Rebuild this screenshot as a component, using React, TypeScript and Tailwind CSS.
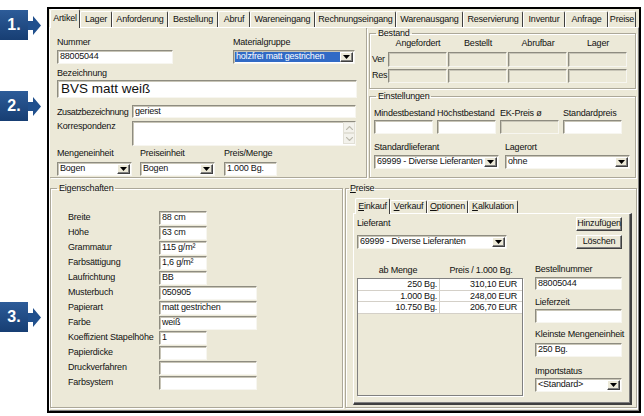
import React from 'react';

const sunken =
  'border border-t-[#8e8c80] border-l-[#8e8c80] border-r-[#f7f6f0] border-b-[#f7f6f0] shadow-[inset_1px_1px_0_#c8c5b7]';
const raised =
  'border border-t-white border-l-white border-r-[#404040] border-b-[#404040] shadow-[inset_-1px_-1px_0_#808080]';
const etched = 'border border-[#aca899] shadow-[inset_1px_1px_0_#fff,1px_1px_0_#fff]';

function Badge({ label }: { label: string }) {
  return (
    <div className="flex items-center h-[30px]">
      <div className="w-[28px] h-[30px] bg-gradient-to-b from-[#2d5c99] to-[#173e73] text-white font-bold text-[16px] tracking-normal flex items-center justify-center">
        {label}
      </div>
      <svg width="14" height="30" viewBox="0 0 14 30">
        <path d="M0 11H5V6L13 15.5L5 25V20H0Z" fill="#21508d" />
      </svg>
    </div>
  );
}

function Label({ children, className = '' }: { children?: React.ReactNode; className?: string }) {
  return <div className={`h-[12px] leading-[12px] whitespace-nowrap ${className}`}>{children}</div>;
}

function Input({ value = '', className = '' }: { value?: string; className?: string }) {
  return (
    <div className={`bg-white ${sunken} pl-[2px] flex items-center whitespace-nowrap overflow-hidden ${className}`}>
      {value}
    </div>
  );
}

function DropArrow() {
  return (
    <div className={`w-[13px] h-full bg-[#ece9d8] ${raised} flex items-center justify-center shrink-0`}>
      <svg width="7" height="4" viewBox="0 0 7 4">
        <path d="M0 0H7L3.5 4Z" fill="#000" />
      </svg>
    </div>
  );
}

function Select({ value, className = '', highlight = false }: { value: string; className?: string; highlight?: boolean }) {
  return (
    <div className={`bg-white ${sunken} flex p-[1px] ${className}`}>
      <div
        className={`flex-1 flex items-center pl-[1px] whitespace-nowrap overflow-hidden ${
          highlight ? 'bg-[#316ac5] text-white' : ''
        }`}
      >
        {value}
      </div>
      <DropArrow />
    </div>
  );
}

function Button({ children }: { children: React.ReactNode }) {
  return (
    <div className={`w-[46px] h-[14px] ${raised} bg-[#ece9d8] flex items-center justify-center whitespace-nowrap ml-auto`}>
      {children}
    </div>
  );
}

const mainTabs: [string, string][] = [
  ['Artikel', 'w-[30px]'],
  ['Lager', 'w-[32px]'],
  ['Anforderung', 'w-[56px]'],
  ['Bestellung', 'w-[50px]'],
  ['Abruf', 'w-[32px]'],
  ['Wareneingang', 'w-[65px]'],
  ['Rechnungseingang', 'w-[81px]'],
  ['Warenausgang', 'w-[67px]'],
  ['Reservierung', 'w-[60px]'],
  ['Inventur', 'w-[42px]'],
  ['Anfrage', 'w-[43px]'],
  ['Preise', 'w-[28px]'],
];

const priceTabs: [string, string, string][] = [
  ['E', 'inkauf', 'w-[35px]'],
  ['V', 'erkauf', 'w-[37px]'],
  ['O', 'ptionen', 'w-[41px]'],
  ['K', 'alkulation', 'w-[50px]'],
];

const properties: [string, string, boolean][] = [
  ['Breite', '88 cm', false],
  ['Höhe', '63 cm', false],
  ['Grammatur', '115 g/m²', false],
  ['Farbsättigung', '1,6 g/m²', false],
  ['Laufrichtung', 'BB', false],
  ['Musterbuch', '050905', true],
  ['Papierart', 'matt gestrichen', true],
  ['Farbe', 'weiß', true],
  ['Koeffizient Stapelhöhe', '1', false],
  ['Papierdicke', '', false],
  ['Druckverfahren', '', true],
  ['Farbsystem', '', true],
];

const prices = [
  ['250 Bg.', '310,10 EUR'],
  ['1.000 Bg.', '248,00 EUR'],
  ['10.750 Bg.', '206,70 EUR'],
];

function ScrollBtn({ up }: { up?: boolean }) {
  return (
    <div className="w-[12px] h-[11px] bg-[#f3f2ec] border border-[#e2e0d6] flex items-center justify-center">
      <svg width="7" height="4" viewBox="0 0 7 4">
        <path d={up ? 'M0 4L3.5 0.5L7 4' : 'M0 0L3.5 3.5L7 0'} stroke="#bcbaae" strokeWidth="1.2" fill="none" />
      </svg>
    </div>
  );
}

export default function App() {
  return (
    <div className="w-[644px] h-[416px] bg-white flex overflow-hidden font-['Liberation_Sans',Arial,sans-serif] text-[9px] tracking-[-0.2px] text-[#111]">
      {/* callout badges */}
      <div className="w-[47px] shrink-0 flex flex-col pt-[10px]">
        <Badge label="1." />
        <div className="mt-[51px]">
          <Badge label="2." />
        </div>
        <div className="mt-[181px]">
          <Badge label="3." />
        </div>
      </div>

      {/* window */}
      <div className="mt-[7px] w-[594px] h-[406px] border-2 border-black bg-[#ece9d8] flex flex-col">
        <div className="h-[18px] flex items-end pl-[1px] shrink-0">
          {mainTabs.map(([name, w], i) => (
            <div
              key={name}
              className={`${w} shrink-0 border-t border-l border-white border-r border-r-[#404040] rounded-t-[2px] flex items-center justify-center whitespace-nowrap ${
                i === 0 ? 'h-[19px] -mb-px relative z-10 bg-[#ece9d8]' : 'h-[16px]'
              }`}
            >
              {name}
            </div>
          ))}
        </div>

        <div className="flex-1 border-t border-l border-white border-r border-b border-r-[#808080] border-b-[#808080] flex flex-col">
          {/* top section */}
          <div className="h-[154px] flex items-start shrink-0">
            <div className="w-[317px] h-[150px] border-r border-b border-[#aca899] shadow-[1px_1px_0_#fff] pl-[7px] pt-[8px] flex flex-col">
              <div className="flex">
                <Label className="w-[176px]">Nummer</Label>
                <Label>Materialgruppe</Label>
              </div>
              <div className="flex mt-[2px]">
                <Input value="88005044" className="w-[116px] h-[14px]" />
                <Select value="holzfrei matt gestrichen" highlight className="w-[122px] h-[14px] ml-[60px]" />
              </div>
              <Label className="mt-[3px]">Bezeichnung</Label>
              <Input value="BVS matt weiß" className="mt-[1px] w-[300px] h-[18px] text-[13.5px] tracking-normal pl-[3px]" />
              <div className="flex mt-[7px] h-[13px] items-center">
                <Label className="w-[75px] tracking-[-0.4px]">Zusatzbezeichnung</Label>
                <Input value="geriest" className="w-[224px] h-[13px]" />
              </div>
              <div className="flex mt-[3px] h-[25px]">
                <Label className="w-[75px] -mt-[1px]">Korrespondenz</Label>
                <div className={`w-[224px] h-[25px] bg-white ${sunken} flex justify-end`}>
                  <div className="flex flex-col">
                    <ScrollBtn up />
                    <ScrollBtn />
                  </div>
                </div>
              </div>
              <div className="flex mt-[1px]">
                <Label className="w-[83px]">Mengeneinheit</Label>
                <Label className="w-[84px]">Preiseinheit</Label>
                <Label>Preis/Menge</Label>
              </div>
              <div className="flex mt-[3px] h-[14px]">
                <Select value="Bogen" className="w-[75px] h-[14px]" />
                <Select value="Bogen" className="w-[75px] h-[14px] ml-[8px]" />
                <Input value="1.000 Bg." className="w-[53px] h-[14px] ml-[9px]" />
              </div>
            </div>

            <div className="ml-[2px] w-[267px] flex flex-col">
              <fieldset className={etched}>
                <legend className="ml-[6px] px-[2px] leading-[10px]">Bestand</legend>
                <div className="flex pl-[18px] h-[11px] leading-[11px]">
                  {['Angefordert', 'Bestellt', 'Abrufbar', 'Lager'].map((h) => (
                    <div key={h} className="w-[60px] text-center">
                      {h}
                    </div>
                  ))}
                </div>
                {['Ver', 'Res'].map((r, i) => (
                  <div key={r} className={`flex items-center ${i === 0 ? 'mt-[3px] h-[15px]' : 'mt-[2px] h-[14px]'}`}>
                    <div className="w-[18px] pl-[2px]">{r}</div>
                    {[0, 1, 2, 3].map((c) => (
                      <div key={c} className={`w-[59px] h-full mr-[1px] ${sunken} bg-[#ece9d8]`} />
                    ))}
                  </div>
                ))}
                <div className="h-[5px]" />
              </fieldset>

              <fieldset className={`${etched} mt-[2px] pl-[4px]`}>
                <legend className="ml-[2px] px-[2px] leading-[10px]">Einstellungen</legend>
                <div className="grid grid-cols-[59px_59px_59px_59px] gap-x-[4px] mt-[6px]">
                  <Label>Mindestbestand</Label>
                  <Label>Höchstbestand</Label>
                  <Label>EK-Preis ø</Label>
                  <Label>Standardpreis</Label>
                  <Input className="h-[14px] mt-[1px]" />
                  <Input className="h-[14px] mt-[1px]" />
                  <div className={`h-[14px] mt-[1px] ${sunken} bg-[#ece9d8]`} />
                  <Input className="h-[14px] mt-[1px]" />
                </div>
                <div className="flex mt-[7px]">
                  <Label className="w-[131px]">Standardlieferant</Label>
                  <Label>Lagerort</Label>
                </div>
                <div className="flex mt-[2px] mb-[8px]">
                  <Select value="69999 - Diverse Lieferanten" className="w-[125px] h-[14px]" />
                  <Select value="ohne" className="w-[125px] h-[14px] ml-[6px]" />
                </div>
              </fieldset>
            </div>
          </div>

          {/* bottom section */}
          <div className="flex">
            <fieldset className={`${etched} w-[293px] h-[226px] pl-[17px]`}>
              <legend className="ml-[-11px] px-[2px] leading-[12px]">Eigenschaften</legend>
              <div className="mt-[17px] flex flex-col gap-[1px]">
                {properties.map(([name, value, long]) => (
                  <div key={name} className="flex items-center h-[14px]">
                    <div className="w-[91px] whitespace-nowrap">{name}</div>
                    <Input value={value} className={`${long ? 'w-[98px]' : 'w-[48px]'} h-[14px]`} />
                  </div>
                ))}
              </div>
            </fieldset>

            <fieldset className={`${etched} ml-[2px] w-[292px] h-[226px]`}>
              <legend className="ml-[3px] px-[1px] leading-[12px]">
                <span className="underline">P</span>reise
              </legend>
              <div className="mt-[4px] h-[15px] pl-[9px] flex items-end">
                {priceTabs.map(([u, rest, w], i) => (
                  <div
                    key={u}
                    className={`${w} shrink-0 border-t border-l border-white border-r border-r-[#404040] rounded-t-[2px] flex items-center justify-center whitespace-nowrap ${
                      i === 0 ? 'h-[16px] -mb-px relative z-10 bg-[#ece9d8]' : 'h-[13px]'
                    }`}
                  >
                    <span className="underline">{u}</span>
                    {rest}
                  </div>
                ))}
              </div>
              <div className="ml-[7px] w-[279px] h-[192px] border-t border-l border-white border-r-2 border-b-2 border-r-[#404040] border-b-[#404040] shadow-[inset_-1px_-1px_0_#808080] flex">
                <div className="w-[169px] pl-[3px] pt-[3px] flex flex-col">
                  <Label>Lieferant</Label>
                  <Select value="69999 - Diverse Lieferanten" className="mt-[6px] w-[150px] h-[14px]" />
                  <div className="flex mt-[15px] h-[12px] leading-[12px]">
                    <div className="w-[82px] text-center">ab Menge</div>
                    <div className="w-[84px] text-center">Preis / 1.000 Bg.</div>
                  </div>
                  <div className="mt-[2px] w-[166px] h-[118px] border border-[#808080] shadow-[1px_1px_0_#fff]">
                    {prices.map(([q, p]) => (
                      <div key={q} className="flex h-[11.5px] leading-[11px] bg-white border-b border-[#d4d0c8]">
                        <div className="w-[82px] text-right pr-[2px] border-r border-[#d4d0c8]">{q}</div>
                        <div className="flex-1 text-right pr-[5px]">{p}</div>
                      </div>
                    ))}
                  </div>
                </div>
                <div className="ml-[12px] w-[87px] pt-[3px] flex flex-col">
                  <Button>Hinzufügen</Button>
                  <div className="mt-[4px]">
                    <Button>Löschen</Button>
                  </div>
                  <Label className="mt-[14px]">Bestellnummer</Label>
                  <Input value="88005044" className="mt-[2px] h-[13px]" />
                  <Label className="mt-[6px]">Lieferzeit</Label>
                  <Input className="mt-[1px] h-[14px]" />
                  <Label className="mt-[5px]">Kleinste Mengeneinheit</Label>
                  <Input value="250 Bg." className="mt-[3px] h-[14px]" />
                  <Label className="mt-[8px]">Importstatus</Label>
                  <Select value="<Standard>" className="mt-[1px] h-[14px]" />
                </div>
              </div>
            </fieldset>
          </div>
        </div>
      </div>
    </div>
  );
}
